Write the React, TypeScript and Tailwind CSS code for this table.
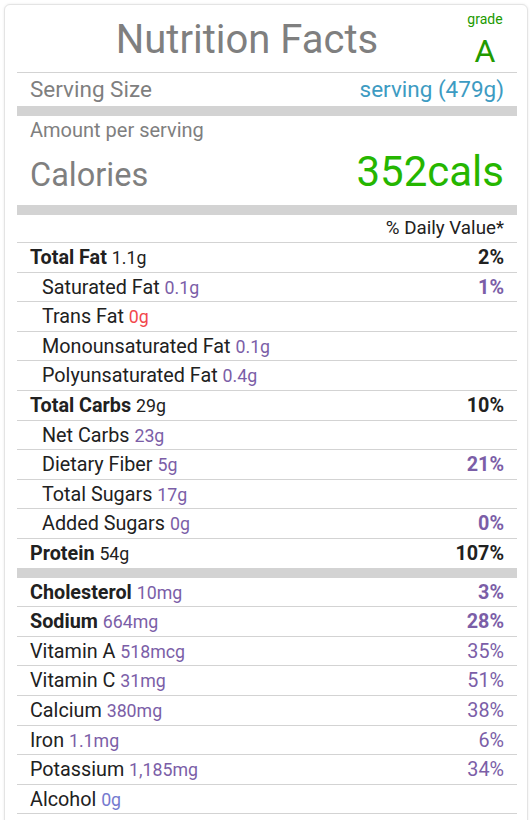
import React from "react";

type Row = {
  label: string;
  value: string;
  valueColor?: string;
  pct?: string;
  pctClass?: string;
  bold?: boolean;
  indent?: boolean;
  last?: boolean;
};

const PURPLE = "text-[#7b5ea7]";

const group1: Row[] = [
  { label: "Total Fat", value: "1.1g", valueColor: "text-[#212121]", pct: "2%", pctClass: "font-bold text-[#212121]", bold: true },
  { label: "Saturated Fat", value: "0.1g", pct: "1%", pctClass: `font-bold ${PURPLE}`, indent: true },
  { label: "Trans Fat", value: "0g", valueColor: "text-[#f2474c]", indent: true },
  { label: "Monounsaturated Fat", value: "0.1g", indent: true },
  { label: "Polyunsaturated Fat", value: "0.4g", indent: true },
  { label: "Total Carbs", value: "29g", valueColor: "text-[#212121]", pct: "10%", pctClass: "font-bold text-[#212121]", bold: true },
  { label: "Net Carbs", value: "23g", indent: true },
  { label: "Dietary Fiber", value: "5g", pct: "21%", pctClass: `font-bold ${PURPLE}`, indent: true },
  { label: "Total Sugars", value: "17g", indent: true },
  { label: "Added Sugars", value: "0g", pct: "0%", pctClass: `font-bold ${PURPLE}`, indent: true },
  { label: "Protein", value: "54g", valueColor: "text-[#212121]", pct: "107%", pctClass: "font-bold text-[#212121]", bold: true, last: true },
];

const group2: Row[] = [
  { label: "Cholesterol", value: "10mg", pct: "3%", pctClass: `font-bold ${PURPLE}`, bold: true },
  { label: "Sodium", value: "664mg", pct: "28%", pctClass: `font-bold ${PURPLE}`, bold: true },
  { label: "Vitamin A", value: "518mcg", pct: "35%", pctClass: PURPLE },
  { label: "Vitamin C", value: "31mg", pct: "51%", pctClass: PURPLE },
  { label: "Calcium", value: "380mg", pct: "38%", pctClass: PURPLE },
  { label: "Iron", value: "1.1mg", pct: "6%", pctClass: PURPLE },
  { label: "Potassium", value: "1,185mg", pct: "34%", pctClass: PURPLE },
  { label: "Alcohol", value: "0g", valueColor: "text-[#7479cf]" },
];

function NRow({ r }: { r: Row }) {
  return (
    <div
      className={`flex items-start justify-between pt-[1px] leading-[28px] text-[19.75px] text-[#212121] ${
        r.last ? "h-[28.6px]" : "h-[29.6px] border-b border-[#d3d3d3]"
      } ${r.indent ? "pl-[25px]" : "pl-[13px]"} pr-[13px]`}
    >
      <div className="whitespace-nowrap">
        <span className={r.bold ? "font-bold" : ""}>{r.label}</span>{" "}
        <span className={`text-[17.75px] ${r.valueColor ?? PURPLE}`}>{r.value}</span>
      </div>
      {r.pct && <div className={`text-[19.75px] ${r.pctClass ?? ""}`}>{r.pct}</div>}
    </div>
  );
}

export default function App() {
  return (
    <div className="min-h-[820px] bg-white pt-[4px] pl-[4px]" style={{ fontFamily: "Roboto, 'Noto Sans', sans-serif" }}>
      <div className="w-[524px] rounded-[6px] border border-[#e4e4e4] bg-white pl-[12px] pr-[10px] pb-[40px] shadow-[0_0_3px_rgba(0,0,0,0.08)]">
        {/* Header */}
        <div className="flex h-[68px] items-start border-b border-[#d3d3d3] px-[13px]">
          <div className="flex-1 pt-[15px] text-center text-[40px] leading-[39px] text-[#7f7f7f]">Nutrition Facts</div>
          <div className="ml-[2px] flex w-[38px] flex-col items-center pt-[7px] text-[#229a00]">
            <div className="text-[14px] leading-[14px]">grade</div>
            <div className="mt-[10px] text-[32px] leading-[31px]">A</div>
          </div>
        </div>

        {/* Serving size */}
        <div className="flex h-[33px] items-start justify-between px-[13px] text-[22.5px] leading-[33px]">
          <span className="text-[#7f7f7f]">Serving Size</span>
          <span className="text-[#3d9bc2]">serving (479g)</span>
        </div>
        <div className="h-[10px] bg-[#d3d3d3]" />

        {/* Amount */}
        <div className="h-[28px] px-[13px] text-[20px] leading-[28px] text-[#7f7f7f]">Amount per serving</div>
        <div className="flex h-[61px] items-baseline justify-between px-[13px] pt-[7px]">
          <span className="text-[32.5px] leading-[41px] text-[#7f7f7f]">Calories</span>
          <span className="text-[42px] leading-[41px] text-[#25b600]">352cals</span>
        </div>
        <div className="h-[10px] bg-[#d3d3d3]" />

        <div className="h-[28px] border-b border-[#d3d3d3] px-[13px] text-right text-[18.75px] leading-[27px] text-[#212121]">
          % Daily Value*
        </div>

        {group1.map((r) => (
          <NRow key={r.label} r={r} />
        ))}
        <div className="h-[10px] bg-[#d3d3d3]" />
        {group2.map((r) => (
          <NRow key={r.label} r={r} />
        ))}
      </div>
    </div>
  );
}
